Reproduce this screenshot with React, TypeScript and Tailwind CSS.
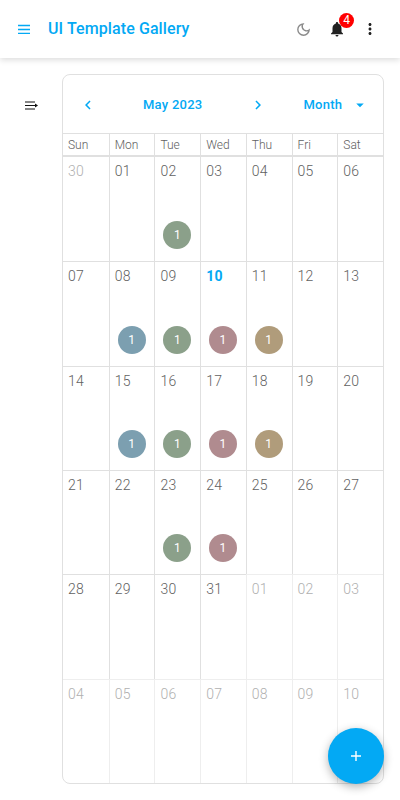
import React from 'react';
import { MdArrowDropDown, MdChevronLeft, MdChevronRight, MdMoreVert, MdNotifications, MdOutlineDarkMode } from 'react-icons/md';

type Cell = { label: string; muted?: boolean; today?: boolean; event?: string };

const BLUE = 'bg-[#7c9fb0]';
const GREEN = 'bg-[#8ba08a]';
const ROSE = 'bg-[#b08b8f]';
const TAN = 'bg-[#b09c7b]';

const weekdays = ['Sun', 'Mon', 'Tue', 'Wed', 'Thu', 'Fri', 'Sat'];

const weeks: Cell[][] = [
  [{ label: '30', muted: true }, { label: '01' }, { label: '02', event: GREEN }, { label: '03' }, { label: '04' }, { label: '05' }, { label: '06' }],
  [{ label: '07' }, { label: '08', event: BLUE }, { label: '09', event: GREEN }, { label: '10', today: true, event: ROSE }, { label: '11', event: TAN }, { label: '12' }, { label: '13' }],
  [{ label: '14' }, { label: '15', event: BLUE }, { label: '16', event: GREEN }, { label: '17', event: ROSE }, { label: '18', event: TAN }, { label: '19' }, { label: '20' }],
  [{ label: '21' }, { label: '22' }, { label: '23', event: GREEN }, { label: '24', event: ROSE }, { label: '25' }, { label: '26' }, { label: '27' }],
  [{ label: '28' }, { label: '29' }, { label: '30' }, { label: '31' }, { label: '01', muted: true }, { label: '02', muted: true }, { label: '03', muted: true }],
  [{ label: '04', muted: true }, { label: '05', muted: true }, { label: '06', muted: true }, { label: '07', muted: true }, { label: '08', muted: true }, { label: '09', muted: true }, { label: '10', muted: true }],
];

const DayCell: React.FC<{ cell: Cell; first: boolean; top: boolean }> = ({ cell, first, top }) => {
  const dim = cell.muted;
  return (
    <div className={`flex flex-col min-w-0 ${top ? '' : 'border-t'} ${first ? '' : 'border-l'} ${dim ? 'border-[#eeeeee]' : 'border-[#e0e0e0]'}`}>
      <div className={`pl-[5px] pt-[4px] text-sm leading-[20px] tracking-[0.25px] ${cell.today ? 'font-bold text-[#03a9f4]' : dim ? 'font-light text-[#b0b0b0]' : 'font-light text-[#616161]'}`}>
        {cell.label}
      </div>
      <div className={`flex-1 flex items-end justify-center pb-[12px] ${first ? '' : 'pr-[1px]'}`}>
        {cell.event && (
          <div className={`w-7 h-7 rounded-full flex items-center justify-center text-white text-xs ${cell.event}`}>1</div>
        )}
      </div>
    </div>
  );
};

export default function App() {
  return (
    <div className="relative h-screen w-full overflow-hidden bg-white font-['Roboto',sans-serif]">
      {/* App bar */}
      <header className="h-[58px] flex items-center bg-white shadow-[0_2px_6px_rgba(0,0,0,0.14)]">
        <div className="w-[48px] flex justify-center">
          <svg width="12" height="10" viewBox="0 0 12 10" className="text-[#03a9f4]">
            <path d="M0 1.5H12M0 5.5H12M0 9.5H12" stroke="currentColor" strokeWidth="1.3" fill="none" />
          </svg>
        </div>
        <h1 className="text-base font-medium leading-none tracking-[0.1px] text-[#03a9f4]">UI Template Gallery</h1>
        <div className="ml-auto flex items-center">
          <MdOutlineDarkMode className="w-[17px] h-[17px] text-[#8a8a8a]" />
          <div className="relative ml-[16px]">
            <MdNotifications className="w-[18px] h-[18px] text-[#212121]" />
            <span className="absolute -top-[7px] -right-[8px] w-[15px] h-[15px] rounded-full bg-[#ff0000] text-white text-xs leading-[15px] text-center">4</span>
          </div>
          <MdMoreVert className="w-[18px] h-[18px] text-[#212121] ml-[15px] mr-[21px]" />
        </div>
      </header>

      {/* Content */}
      <main className="flex pt-[16px]">
        <div className="w-[62px] pt-[27px] pl-[25px]">
          <svg width="13" height="10" viewBox="0 0 13 10" className="text-[#111111]">
            <path d="M0 1H10M0 4.5H10M0 8H10" stroke="currentColor" strokeWidth="1" fill="none" />
            <path d="M10 2.5L13 4.5L10 6.5Z" fill="currentColor" />
          </svg>
        </div>

        {/* Calendar card */}
        <section className="w-[322px] h-[710px] border border-[#e0e0e0] rounded-lg flex flex-col overflow-hidden">
          <div className="h-[58px] pt-[2px] flex items-center text-[#03a9f4] text-[13px] font-medium tracking-[0.25px]">
            <MdChevronLeft className="w-[18px] h-[18px] ml-[16px]" />
            <span className="ml-[46px]">May 2023</span>
            <MdChevronRight className="w-[18px] h-[18px] ml-[47px]" />
            <span className="ml-[36px]">Month</span>
            <MdArrowDropDown className="w-[18px] h-[18px] ml-[9px]" />
          </div>
          <div className="grid grid-cols-7 h-[24px] border-t border-b-2 border-[#e0e0e0]">
            {weekdays.map((day, i) => (
              <div key={day} className={`pl-[5px] text-xs font-light leading-[22px] text-[#616161] ${i ? 'border-l border-[#e0e0e0]' : ''}`}>{day}</div>
            ))}
          </div>
          <div className="flex-1 grid grid-cols-7 grid-rows-6">
            {weeks.map((week, w) =>
              week.map((cell, d) => <DayCell key={`${w}-${d}`} cell={cell} first={d === 0} top={w === 0} />)
            )}
          </div>
        </section>
      </main>

      {/* Floating action button */}
      <button className="absolute left-[328px] top-[728px] w-14 h-14 rounded-full bg-[#03a9f4] text-white flex items-center justify-center shadow-[0_3px_10px_rgba(0,0,0,0.3)]">
        <svg width="12" height="12" viewBox="0 0 12 12">
          <path d="M6 1V11M1 6H11" stroke="currentColor" strokeWidth="1.4" fill="none" />
        </svg>
      </button>
    </div>
  );
}
